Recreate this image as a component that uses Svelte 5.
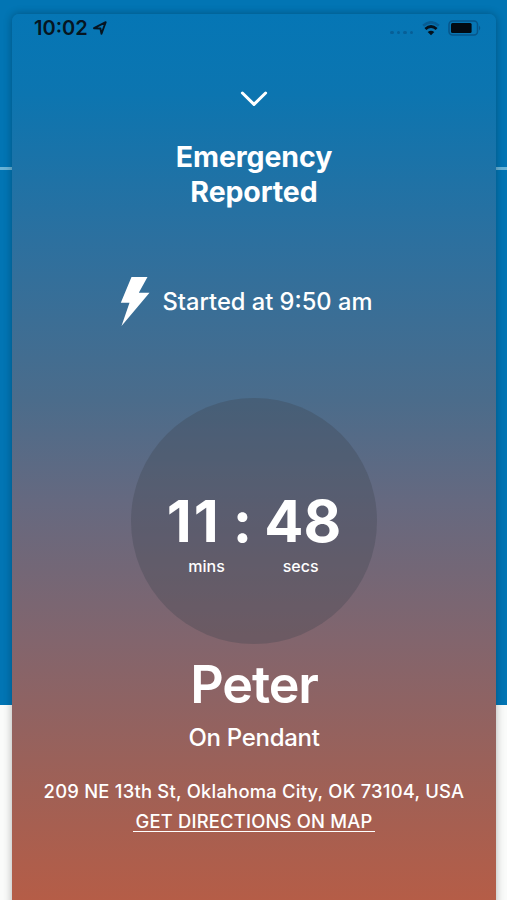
<script>
	const startedAt = '9:50 am';
	const person = { name: 'Peter', source: 'On Pendant' };
	const address = '209 NE 13th St, Oklahoma City, OK 73104, USA';

	const timer = [
		{ value: '11', unit: 'mins' },
		{ value: '48', unit: 'secs' },
	];
</script>

<main>
	<section class="sheet">
		<header class="status-bar">
			<span class="clock">10:02</span>
			<svg class="location" viewBox="0 0 14 14" width="14" height="14">
				<path d="M1 7.2 12.7 1.2 8.5 12.8 7.4 7.5Z" />
			</svg>
			<div class="indicators">
				<div class="dots">
					{#each [0, 1, 2, 3] as dot (dot)}
						<i></i>
					{/each}
				</div>
				<svg class="wifi" viewBox="0 0 18 15" width="18" height="15">
					<path class="faint" d="M1.2 4.8Q9-2 16.8 4.8" />
					<path d="M3.4 8Q9 3 14.6 8" />
					<path class="solid" d="M9 14.2 5.7 11Q9 8.3 12.3 11Z" />
				</svg>
				<svg class="battery" viewBox="0 0 34 16" width="34" height="16">
					<rect class="shell" x="1" y="1" width="28.5" height="14" rx="3.5" />
					<rect x="3" y="3" width="20.6" height="10" rx="1.5" />
					<path class="tip" d="M31 5.5Q33.5 8 31 10.5Z" />
				</svg>
			</div>
		</header>

		<button class="collapse" aria-label="Close">
			<svg viewBox="0 0 28 16" width="28" height="16">
				<path d="M2.4 2 14 13.4 25.6 2" />
			</svg>
		</button>

		<h1>Emergency<br />Reported</h1>

		<div class="started">
			<svg viewBox="0 0 30 49" width="30" height="49">
				<path d="M11.5 0H27.5L18.8 15.8H29.5L1.5 49 9.5 25.8H.8Z" />
			</svg>
			<p>Started at {startedAt}</p>
		</div>

		<div class="timer">
			{#each timer as part, i (part.unit)}
				{#if i > 0}
					<span class="colon">:</span>
				{/if}
				<div class="part {part.unit}">
					<strong>{part.value}</strong>
					<small>{part.unit}</small>
				</div>
			{/each}
		</div>

		<h2>{person.name}</h2>
		<p class="source">{person.source}</p>
		<p class="address">{address}</p>
		<a class="directions" href="#map">GET DIRECTIONS ON MAP</a>
	</section>
</main>

<style>
	:global(body) {
		margin: 0;
	}

	main {
		box-sizing: border-box;
		width: 507px;
		height: 900px;
		padding: 14px 11px 0 12px;
		overflow: hidden;
		font-family: Inter, sans-serif;
		background: linear-gradient(
			#0275b4 167px,
			#69b4d8 167px,
			#69b4d8 170px,
			#0275b4 170px,
			#0275b4 705px,
			#fafbfa 705px
		);
	}

	.sheet {
		display: flex;
		flex-direction: column;
		align-items: center;
		height: 900px;
		border-radius: 7px 7px 0 0;
		color: #fff;
		background: linear-gradient(
			#0576b5 0,
			#0c75b0 80px,
			#2c709f 226px,
			#4b6c8b 386px,
			#656980 486px,
			#82656d 626px,
			#a06055 776px,
			#b55d47 886px
		);
		box-shadow: 0 0 9px rgba(0, 0, 0, 0.3);
	}

	/* Status bar */
	.status-bar {
		display: flex;
		align-items: center;
		align-self: stretch;
		height: 28px;
		padding: 0 14px 0 22px;
		color: #061521;
	}

	.clock {
		font-size: 20px;
		font-weight: 600;
		line-height: 28px;
	}

	.location {
		margin-left: 5px;
		fill: none;
		stroke: #061521;
		stroke-width: 1.9;
		stroke-linejoin: round;
	}

	.indicators {
		display: flex;
		align-items: center;
		margin-left: auto;
	}

	.dots {
		display: flex;
		gap: 3px;
		margin: 9px 9px 0 0;
	}

	.dots i {
		width: 3.4px;
		height: 3.4px;
		border-radius: 50%;
		background: #075f97;
	}

	.wifi {
		margin-right: 8px;
		fill: none;
		stroke: #04111c;
		stroke-width: 2.8;
	}

	.wifi .faint {
		stroke: #075e95;
	}

	.wifi .solid {
		fill: #04111c;
		stroke: none;
	}

	.battery {
		fill: #020a12;
	}

	.battery .shell {
		fill: none;
		stroke: #07568a;
		stroke-width: 1.5;
	}

	.battery .tip {
		fill: #07568a;
	}

	/* Heading */
	.collapse {
		display: flex;
		margin-top: 49px;
		padding: 0;
		border: 0;
		background: none;
	}

	.collapse path {
		fill: none;
		stroke: #fff;
		stroke-width: 3;
		stroke-linecap: round;
		stroke-linejoin: round;
	}

	h1 {
		margin: 32px 0 0;
		font-size: 28.5px;
		font-weight: 700;
		line-height: 35px;
		letter-spacing: -0.1px;
		text-align: center;
	}

	.started {
		display: flex;
		align-items: center;
		margin: 68px 16px 0 0;
		gap: 13px;
	}

	.started svg {
		fill: #fff;
	}

	.started p {
		margin: 0;
		font-size: 23.7px;
		font-weight: 500;
		line-height: 30px;
	}

	/* Timer */
	.timer {
		display: flex;
		box-sizing: border-box;
		justify-content: center;
		width: 246px;
		height: 246px;
		margin-top: 72px;
		padding-top: 88px;
		border-radius: 50%;
		background: rgba(60, 65, 75, 0.3);
	}

	.part {
		display: flex;
		flex-direction: column;
		align-items: center;
	}

	.part strong,
	.colon {
		font-size: 58px;
		font-weight: 700;
		line-height: 70px;
	}

	.mins strong {
		letter-spacing: 2px;
	}

	.colon {
		margin: 0 12px;
	}

	.part small {
		font-size: 16px;
		font-weight: 500;
		line-height: 20px;
	}

	.mins small {
		align-self: flex-end;
		margin-right: -4px;
	}

	.secs small {
		margin-right: 4px;
	}

	/* Person */
	h2 {
		margin: 10px 0 0;
		font-size: 52px;
		font-weight: 600;
		line-height: 62px;
		letter-spacing: -1.1px;
	}

	.source {
		margin: 7px 0 0;
		font-size: 24px;
		font-weight: 500;
		line-height: 30px;
		letter-spacing: -0.3px;
	}

	.address {
		margin: 25px 0 0;
		font-size: 18.4px;
		font-weight: 500;
		line-height: 26px;
		letter-spacing: 0.23px;
		white-space: nowrap;
	}

	.directions {
		margin-top: 8px;
		padding: 0 2px;
		border-bottom: 1px solid #fff;
		color: #fff;
		font-size: 18.4px;
		font-weight: 500;
		line-height: 19px;
		letter-spacing: 0.2px;
		text-decoration: none;
	}
</style>
